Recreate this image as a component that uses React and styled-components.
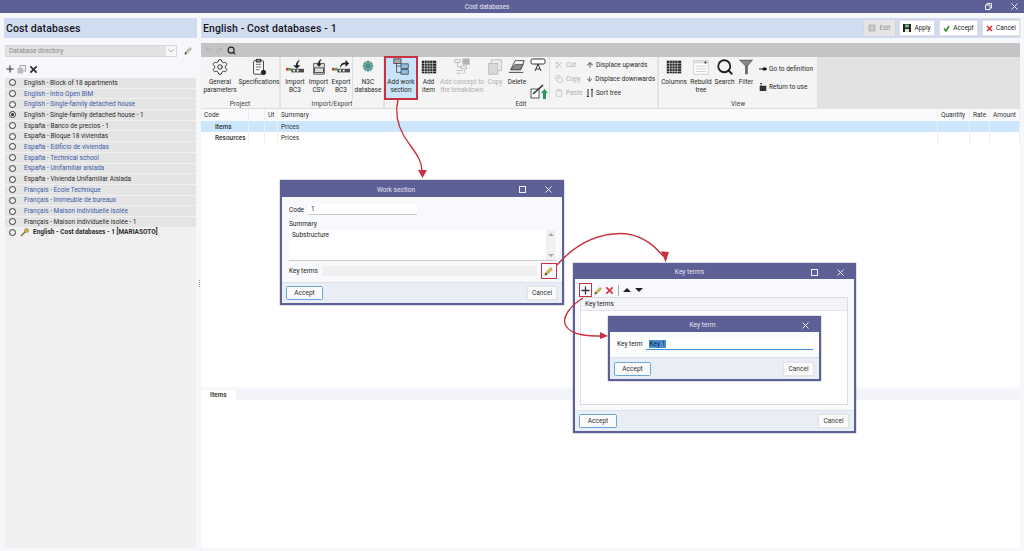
import React from "react";
import styled, { createGlobalStyle } from "styled-components";
import { Settings, Undo2, Redo2, Search, Scissors, Copy, Clipboard, ArrowUp, ArrowDown } from "lucide-react";

const Global = createGlobalStyle`
  html, body { margin: 0; padding: 0; background: #f6f7fb; }
  body { font-family: Roboto, "Noto Sans", sans-serif; color: #222; }
`;

const Page = styled.div`
  position: relative; width: 1024px; height: 551px; overflow: hidden;
  background: #f6f7fb; display: flex; flex-direction: column; font-size: 6.5px;
`;
const TitleBar = styled.div`
  height: 13px; flex: none; background: #5d6095; color: #e9eaf4; position: relative; box-sizing: border-box; padding-right: 50px;
  display: flex; align-items: center; justify-content: center; font-size: 6.4px;
`;
const WinButtons = styled.div`
  position: absolute; right: 0; top: 0; height: 13px; display: flex; align-items: center; gap: 19px; padding-right: 6px;
`;
const Columns = styled.div`
  flex: 1; display: flex; padding: 5px 4px 3px 4px; min-height: 0;
`;
const Side = styled.aside`
  width: 193px; flex: none; display: flex; flex-direction: column;
`;
const Splitter = styled.div`
  width: 4px; flex: none; display: flex; flex-direction: column; align-items: center; justify-content: center; gap: 1px;
  i { width: 1px; height: 1px; background: #999; display: block; }
`;
const PanelHeader = styled.div`
  height: 20px; flex: none; background: #d0dcf0; display: flex; align-items: center; padding-left: 2px; justify-content: space-between;
`;
const PanelTitle = styled.h1`
  margin: 0; font-size: 10.5px; font-weight: 500; color: #15151f; letter-spacing: 0.1px;
`;
const DirRow = styled.div`
  display: flex; align-items: center; gap: 7px; padding: 6px 4px 0 1px; height: 13px;
`;
const DirSelect = styled.div`
  width: 172px; height: 12px; box-sizing: border-box; border: 1px solid #d8d8d8; background: #e2e2e2; color: #8a8a8a;
  display: flex; align-items: center; justify-content: space-between; padding: 0 0 0 3px;
  span:last-child { width: 10px; height: 10px; background: #f6f6f6; display: flex; align-items: center; justify-content: center; }
`;
const MiniBar = styled.div`
  display: flex; align-items: center; gap: 3px; padding: 7px 0 4px 2px; height: 10px;
`;
const DbList = styled.div`
  flex: 1; background: #f0f0f0; display: flex; flex-direction: column; margin: 0 1px;
`;
const DbRow = styled.div`
  height: 9.7px; margin-bottom: 1px; background: #e4e4e4; display: flex; align-items: center; padding-left: 4px; gap: ${p => (p.$bold ? 4 : 8)}px;
  color: ${p => (p.$link ? "#3a5ba8" : "#2a2a2a")}; font-weight: ${p => (p.$bold ? 700 : 400)}; white-space: nowrap;
  &:last-of-type { background: #f0f0f0; }
`;
const Radio = styled.span`
  width: 7px; height: 7px; box-sizing: border-box; border: 1px solid #333; border-radius: 50%; flex: none; background: #f4f4f4;
  display: flex; align-items: center; justify-content: center;
  &::after { content: ""; width: 3px; height: 3px; border-radius: 50%; background: ${p => (p.$on ? "#222" : "transparent")}; }
`;
const Main = styled.main`
  flex: 1; min-width: 0; display: flex; flex-direction: column;
`;
const HeaderActions = styled.div`
  display: flex; gap: 4px;
`;
const ActionButton = styled.button`
  width: ${p => p.$w}px; height: 16px; box-sizing: border-box; font: inherit; font-size: 6.5px; border: 1px solid #e3e3e3;
  background: ${p => (p.$off ? "#e6e6e6" : "#fff")}; color: ${p => (p.$off ? "#8e8e8e" : "#222")};
  display: flex; align-items: center; justify-content: center; gap: 3px; padding: 0; box-shadow: 0 0 1px #bbb;
`;
const GreyBar = styled.div`
  margin-top: 5px; height: 14px; flex: none; background: #c4c4c4; display: flex; align-items: center; gap: 2px; padding-left: 4px;
`;
const Ribbon = styled.div`
  height: 52px; flex: none; background: #e2e2e2; display: flex;
`;
const Group = styled.section`
  width: ${p => p.$w}px; flex: none; background: #f4f4f4; margin-right: 2px; display: flex; flex-direction: column; border-bottom: 1px solid #ddd; box-sizing: border-box;
`;
const GroupTools = styled.div`
  height: 39px; flex: none; display: flex; align-items: flex-start;
`;
const GroupLabel = styled.div`
  flex: 1; padding-top: 4px; display: flex; align-items: center; justify-content: center; color: #444;
`;
const Tool = styled.div`
  width: ${p => p.$w}px; flex: none; height: 42px; box-sizing: border-box; display: flex; flex-direction: column; align-items: center; position: relative;
  text-align: center; line-height: 8.3px; padding-top: 1px; color: ${p => (p.$off ? "#aeaeae" : "#2a2a2a")};
  ${p => p.$hot && "background: #c9e4f8; outline: 2px solid #c8313f; outline-offset: -1px;"}
  white-space: nowrap;
  svg { flex: none; height: 18px; margin-bottom: 2px; }
`;
const VSep = styled.div`
  width: 1px; height: 42px; background: #ddd; flex: none;
`;
const SmallCol = styled.div`
  width: ${p => p.$w}px; flex: none; display: flex; flex-direction: column; gap: ${p => p.$gap ?? 4}px; padding-top: ${p => p.$top ?? 3}px; padding-left: ${p => p.$left ?? 0}px; box-sizing: border-box;
`;
const SmallTool = styled.div`
  display: flex; align-items: center; gap: ${p => p.$gap ?? 2}px; height: 10px; color: ${p => (p.$off ? "#aeaeae" : "#2a2a2a")}; white-space: nowrap;
`;
const TableHead = styled.div`
  height: 12px; flex: none; display: grid; grid-template-columns: 48px 16px 13px 660px 32px 20px 30px;
  align-items: center; background: #fafafc;
`;
const GridRow = styled.div`
  height: 11px; flex: none; display: grid; grid-template-columns: 48px 16px 13px 660px 32px 20px 30px; align-items: center;
  background: ${p => (p.$sel ? "#cbe6fd" : "#fff")};
`;
const Cell = styled.div`
  height: 100%; display: flex; align-items: center; box-sizing: border-box; border-right: 1px solid #eceef4; padding-left: ${p => p.$pad ?? 3}px;
  font-weight: ${p => (p.$bold ? 500 : 400)}; white-space: nowrap; color: #333;
`;
const TableBody = styled.div`
  height: 244px; flex: none; background: #fff;
`;
const TabBar = styled.div`
  margin-top: 3px; height: 10px; flex: none; display: flex; background: #f3f4fa;
`;
const Tab = styled.div`
  width: 35px; background: #fff; display: flex; align-items: center; padding-left: 9px; box-sizing: border-box; font-weight: 700; color: #444;
`;
const Lower = styled.div`
  flex: 1; background: #fff;
`;
const Win = styled.div`
  position: absolute; left: ${p => p.$x}px; top: ${p => p.$y}px; width: ${p => p.$w}px; height: ${p => p.$h}px; box-sizing: border-box;
  border: 2px solid #5d6095; border-top: 0; background: #f8f9fd; display: flex; flex-direction: column;
  box-shadow: 0 0 1px #444a80;
`;
const WinTitle = styled.div`
  height: ${p => p.$h || 16}px; flex: none; background: #5d6095; color: #e4e5f1; position: relative; display: flex; align-items: center; justify-content: center;
  font-size: 6.6px; margin: 0 -2px; box-sizing: border-box; padding: 2px ${p => p.$shift || 0}px 0 0;
`;
const WinTools = styled.div`
  position: absolute; right: 12px; top: 2px; bottom: 0; display: flex; align-items: center; gap: 19px;
`;
const WinBody = styled.div`
  flex: 1; display: flex; flex-direction: column; padding: ${p => p.$pad || "0"}; min-height: 0; background: ${p => p.$bg || "#f8f9fd"};
`;
const WinFooter = styled.div`
  height: ${p => p.$h || 21}px; flex: none; background: #e8edf6; border-top: 1px solid #dde1ea; display: flex; align-items: center; justify-content: space-between;
  padding: 0 5px 0 4px; box-sizing: border-box;
`;
const DlgButton = styled.button`
  width: ${p => p.$w}px; height: 14px; box-sizing: border-box; font: inherit; font-size: 6.6px; padding: 0; border-radius: 1.5px; background: #fafafa; color: #333;
  border: 1px solid ${p => (p.$primary ? "#6ba6d8" : "#e4e4e4")}; box-shadow: ${p => (p.$primary ? "none" : "0 0 1px #ccc")};
`;
const FieldRow = styled.div`
  display: flex; align-items: center; gap: ${p => p.$gap || 4}px; margin-top: ${p => p.$top || 0}px; white-space: nowrap;
`;
const FieldCaption = styled.span`
  margin-top: 5px;
`;
const TextField = styled.div`
  width: ${p => p.$w}px; height: ${p => p.$h || 11}px; box-sizing: border-box; background: #fff; border-bottom: 1px solid ${p => p.$line || "#ccc"};
  display: flex; align-items: center; padding-left: 3px; flex: none;
`;
const Selected = styled.span`
  background: #4a90d8; color: #123; padding: 0 1px;
`;
const SummaryBox = styled.div`
  margin-top: 2px; height: 31px; background: #fff; border-bottom: 1px solid #ccc; display: flex; justify-content: space-between; padding: 1px 1px 0 3px; box-sizing: border-box; flex: none;
`;
const ScrollTrack = styled.div`
  width: 10px; background: #f1f1f1; display: flex; flex-direction: column; justify-content: space-between; align-items: center; padding: 3px 0; margin-top: -1px;
  i { width: 0; height: 0; border-left: 3px solid transparent; border-right: 3px solid transparent; display: block; }
  i:first-child { border-bottom: 3px solid #aaa; }
  i:last-child { border-top: 3px solid #aaa; }
`;
const ReadOnly = styled.div`
  flex: 1; height: 10px; background: #f0f0f0;
`;
const RedBox = styled.div`
  width: ${p => p.$w}px; height: ${p => p.$h}px; box-sizing: border-box; border: 1.5px solid #c8313f; display: flex; align-items: center; justify-content: center; flex: none;
`;
const KeyToolbar = styled.div`
  height: 14px; flex: none; display: flex; align-items: center; gap: 2px; margin: 4px 0 0 4px;
`;
const ToolDivider = styled.div`
  width: 1px; height: 11px; background: #aaa; margin: 0 2px;
`;
const Tri = styled.i`
  width: 0; height: 0; display: block; border-left: 4px solid transparent; border-right: 4px solid transparent; margin-left: ${p => (p.$down ? 2 : 0)}px;
  ${p => (p.$down ? "border-top: 4px solid #222;" : "border-bottom: 4px solid #222;")}
`;
const ListBox = styled.div`
  flex: 1; margin: 0 6px 5px 5px; background: #fff; border: 1px solid #ddd; display: flex; flex-direction: column;
`;
const ListHead = styled.div`
  height: 12px; flex: none; background: #f3f4fa; display: flex; align-items: center; padding-left: 4px; border-bottom: 1px solid #e4e4e4;
`;
const Overlay = styled.svg`
  position: absolute; left: 0; top: 0; width: 1024px; height: 551px; pointer-events: none;
`;

const Pencil = ({ size = 10, color = "#e2b93b" }) => (
  <svg width={size} height={size} viewBox="0 0 12 12">
    <path d="M2 8 8 2l2 2-6 6-3 1z" fill={color} stroke="#7d6a2a" strokeWidth=".6" />
    <path d="M1 11l1-3 2 2z" fill="#333" />
  </svg>
);
const Cross = ({ size = 9, color = "#333", w = 2 }) => (
  <svg width={size} height={size} viewBox="0 0 10 10"><path d="M1.500 1.500l7 7M8.500 1.500l-7 7" stroke={color} strokeWidth={w} fill="none" /></svg>
);
const PlusIcon = ({ size = 10 }) => (
  <svg width={size} height={size} viewBox="0 0 10 10"><path d="M5 .5v9M.5 5h9" stroke="#333" strokeWidth="1.400" fill="none" /></svg>
);
const WinClose = () => <svg width="7" height="7" viewBox="0 0 7 7"><path d="M.5.5l6 6M6.500.5l-6 6" stroke="#f0f0f6" strokeWidth="1" /></svg>;
const WinMax = () => <svg width="7" height="7" viewBox="0 0 7 7"><rect x=".5" y=".5" width="6" height="6" fill="none" stroke="#f0f0f6" strokeWidth="1" /></svg>;
const WinRestore = () => <svg width="7" height="7" viewBox="0 0 7 7"><path d="M.5 2h4.500v4.500H.5zM2 2V.5h4.500V5H5" fill="none" stroke="#fff" strokeWidth=".9" /></svg>;

const Clip = () => (
  <svg width="20" height="20" viewBox="0 0 20 20" fill="none" stroke="#333">
    <rect x="4" y="3" width="11" height="15" rx="1" fill="#fff" /><rect x="7" y="1.500" width="5" height="3" fill="#888" />
    <path d="M6.500 7h6M6.500 10h6M6.500 13h4" strokeWidth=".8" /><circle cx="15" cy="16" r="2.500" fill="#222" />
  </svg>
);
const Bc3 = ({ up }) => (
  <svg width="22" height="20" viewBox="0 0 22 20">
    <rect x="1" y="11" width="3" height="3" fill="#c33" /><rect x="4" y="11" width="3" height="3" fill="#4a4" />
    <rect x="7" y="12" width="14" height="4" fill="#222" opacity=".8" /><rect x="9" y="13" width="2" height="2" fill="#fff" /><rect x="13" y="13" width="2" height="2" fill="#fff" />
    <path d={up ? "M10 11c0-4 2-6 6-6V2l4 4-4 4V7c-3 0-4 1-6 4z" : "M17 2c-3 1-5 3-5 6H9l4 4 4-4h-3c0-2 1-4 3-6z"} fill="#222" />
  </svg>
);
const Csv = () => (
  <svg width="20" height="20" viewBox="0 0 20 20">
    <path d="M4 6h12v12H4z" fill="#ddd" stroke="#333" strokeWidth=".8" /><rect x="5" y="11" width="10" height="5" fill="none" stroke="#222" strokeWidth=".8" />
    <path d="M13 1c-3 1-4 3-4 5H7l3 4 3-4h-2c0-2 1-3 2-5z" fill="#222" />
  </svg>
);
const N3c = () => (
  <svg width="18" height="20" viewBox="0 0 18 20"><circle cx="9" cy="9" r="6" fill="#7fb8ae" /><path d="M4 9h10M9 3v12M5 5l8 8M13 5l-8 8" stroke="#2f6d73" strokeWidth="1" /><circle cx="9" cy="9" r="2" fill="#4a90a0" /></svg>
);
const WorkSection = () => (
  <svg width="20" height="20" viewBox="0 0 20 20" fill="none" stroke="#333" strokeWidth=".8">
    <rect x="2" y="1" width="8" height="5" fill="#aaa" /><rect x="10" y="6.500" width="8" height="5" fill="#8fc2e8" /><rect x="10" y="13" width="8" height="5" fill="#8fc2e8" />
    <path d="M5 6v10h5M5 9h5" />
  </svg>
);
const Grid = () => (
  <svg width="18" height="20" viewBox="0 0 18 20"><rect x="1" y="3" width="16" height="14" fill="#222" /><path d="M1 6h16M1 9h16M1 12h16M1 15h16M4 3v14M7 3v14M10 3v14M13 3v14" stroke="#ddd" strokeWidth=".7" /></svg>
);
const Concept = () => (
  <svg width="20" height="20" viewBox="0 0 20 20" fill="none" stroke="#b9b9b9"><rect x="11" y="1" width="7" height="6" fill="#b0b0b0" /><rect x="2" y="2" width="6" height="3" /><rect x="9" y="9" width="6" height="3" /><path d="M5 5v5h4M4 14h7M4 17h5M13 13v3l-2 1" /></svg>
);
const BigCopy = () => (
  <svg width="18" height="20" viewBox="0 0 18 20"><rect x="5" y="2" width="11" height="12" fill="#eee" stroke="#bbb" /><rect x="2" y="6" width="10" height="12" fill="#d9d9d9" stroke="#bbb" /></svg>
);
const Erase = () => (
  <svg width="20" height="20" viewBox="0 0 20 20"><path d="M3 13L8 3h10l-4 10z" fill="#fff" stroke="#333" /><path d="M3 13L8 7h9l-3 6z" fill="#888" stroke="#333" strokeWidth=".7" /><path d="M1 16h16" stroke="#555" strokeWidth="1.200" /></svg>
);
const Label = () => (
  <svg width="16" height="16" viewBox="0 0 16 16" fill="none" stroke="#333"><rect x="1" y="1" width="14" height="5" rx="1.500" fill="#fff" /><path d="M5 13l3-7 3 7M6 11h4" /></svg>
);
const Replace = () => (
  <svg width="18" height="18" viewBox="0 0 18 18"><rect x="1" y="7" width="8" height="9" fill="#fff" stroke="#333" strokeWidth=".8" /><path d="M3 12l10-9" stroke="#333" strokeWidth="1.600" /><path d="M13 17V11H11l3.500-4 3.500 4h-2v6z" fill="#2a9a5b" /></svg>
);
const Rebuild = () => (
  <svg width="18" height="20" viewBox="0 0 18 20" fill="none"><rect x="1" y="3" width="16" height="15" fill="#fff" stroke="#ccc" /><rect x="1" y="3" width="16" height="3" fill="#ddd" /><rect x="13" y="4" width="2" height="2" fill="#222" /><path d="M3 9h12M3 12h12M3 15h12" stroke="#bbb" strokeWidth=".7" /></svg>
);
const FunnelIcon = () => (
  <svg width="16" height="20" viewBox="0 0 16 20"><path d="M0 2h16L10 9v9H7V9z" fill="#666" /><path d="M2 3h12l-5 5H7z" fill="#8a8a8a" /></svg>
);
const Goto = () => <svg width="8" height="8" viewBox="0 0 8 8"><path d="M0 4h8M4 3h3v2H4z" stroke="#222" strokeWidth="1" /></svg>;
const Back = () => <svg width="8" height="8" viewBox="0 0 8 8"><path d="M1 3h6v5H1zM2 0v3M3 1L2 0 1 1" fill="#333" stroke="#333" strokeWidth=".6" /></svg>;
const SortIcon = () => <svg width="8" height="8" viewBox="0 0 8 8"><path d="M2 0v8M1 7l1 1 1-1M6 8V0M5 1l1-1 1 1" stroke="#333" strokeWidth="1" fill="none" /></svg>;
const KeyIcon = () => (
  <svg width="9" height="9" viewBox="0 0 9 9"><circle cx="6.500" cy="2.500" r="2" fill="#d8b040" stroke="#7d6a2a" strokeWidth=".5" /><path d="M5 4L1 8" stroke="#7d6a2a" strokeWidth="1.300" /></svg>
);
const FloppyIcon = () => (
  <svg width="8" height="8" viewBox="0 0 8 8"><rect width="8" height="8" fill="#222" /><rect x="2" y=".5" width="4" height="3" fill="#6b8" /><rect x="2" y="5" width="4" height="3" fill="#ddd" /></svg>
);
const Tick = () => <svg width="7" height="7" viewBox="0 0 7 7"><path d="M1 3.500l2 2.500 3-5" stroke="#2a8a2a" strokeWidth="1.500" fill="none" /></svg>;

const dbs = [
  ["English - Block of 18 apartments"],
  ["English - Intro Open BIM", 1],
  ["English - Single-family detached house", 1],
  ["English - Single-family detached house - 1", 0, 1],
  ["España - Banco de precios - 1"],
  ["España - Bloque 18 viviendas"],
  ["España - Edificio de viviendas", 1],
  ["España - Technical school", 1],
  ["España - Unifamiliar aislada", 1],
  ["España - Vivienda Unifamiliar Aislada"],
  ["Français - École Technique", 1],
  ["Français - Immeuble de bureaux", 1],
  ["Français - Maison individuelle isolée", 1],
  ["Français - Maison individuelle isolée - 1"],
];

const stroke = { strokeWidth: 1.300, color: "#333" };

export default function App() {
  return (
    <Page>
      <Global />
      <TitleBar>
        Cost databases
        <WinButtons><WinRestore /><WinClose /></WinButtons>
      </TitleBar>
      <Columns>
        <Side>
          <PanelHeader><PanelTitle>Cost databases</PanelTitle></PanelHeader>
          <DirRow>
            <DirSelect>
              <span>Database directory</span>
              <span><svg width="6" height="4" viewBox="0 0 6 4"><path d="M.5.5L3 3 5.500.5" fill="none" stroke="#aaa" /></svg></span>
            </DirSelect>
            <Pencil size={9} color="#c9c9c9" />
          </DirRow>
          <MiniBar>
            <PlusIcon size={8} />
            <svg width="9" height="9" viewBox="0 0 9 9"><rect x="3" y="0.500" width="5.500" height="5.500" fill="#eee" stroke="#aaa" /><rect x=".5" y="3" width="5.500" height="5.500" fill="#bbb" /></svg>
            <Cross size={9} color="#333" />
          </MiniBar>
          <DbList>
            {dbs.map(([t, link, on]) => (
              <DbRow key={t} $link={!!link}><Radio $on={!!on} /><span>{t}</span></DbRow>
            ))}
            <DbRow $bold><Radio /><KeyIcon /><span>English - Cost databases - 1 [MARIASOTO]</span></DbRow>
          </DbList>
        </Side>
        <Splitter><i /><i /><i /><i /></Splitter>
        <Main>
          <PanelHeader>
            <PanelTitle>English - Cost databases - 1</PanelTitle>
            <HeaderActions>
              <ActionButton $w={31} $off><svg width="8" height="8" viewBox="0 0 8 8"><rect x="1" y="1" width="6" height="6" fill="#ccc" stroke="#999" strokeWidth=".6" /></svg>Edit</ActionButton>
              <ActionButton $w={36}><FloppyIcon />Apply</ActionButton>
              <ActionButton $w={39}><Tick />Accept</ActionButton>
              <ActionButton $w={38}><Cross size={7} color="#d8232a" w={2} />Cancel</ActionButton>
            </HeaderActions>
          </PanelHeader>
          <GreyBar>
            <Undo2 size={8} color="#aaa" strokeWidth={2} />
            <Redo2 size={8} color="#aaa" strokeWidth={2} />
            <Search size={9} color="#222" strokeWidth={3} style={{ marginLeft: 2 }} />
          </GreyBar>
          <Ribbon>
            <Group $w={78}>
              <GroupTools>
                <Tool $w={38}><Settings size={18} {...stroke} />General<br />parameters</Tool>
                <Tool $w={40}><Clip />Specifications</Tool>
              </GroupTools>
              <GroupLabel>Project</GroupLabel>
            </Group>
            <Group $w={102}>
              <GroupTools>
                <Tool $w={24} style={{ marginLeft: 2 }}><Bc3 />Import<br />BC3</Tool>
                <Tool $w={23}><Csv />Import<br />CSV</Tool>
                <Tool $w={22}><Bc3 up />Export<br />BC3</Tool>
                <VSep />
                <Tool $w={30}><N3c />N3C<br />database</Tool>
              </GroupTools>
              <GroupLabel>Import/Export</GroupLabel>
            </Group>
            <Group $w={272}>
              <GroupTools>
                <Tool $w={32} $hot><WorkSection />Add work<br />section</Tool>
                <Tool $w={23}><Grid />Add<br />item</Tool>
                <Tool $w={44} $off><Concept />Add concept to<br />the breakdown</Tool>
                <Tool $w={22} $off><BigCopy />Copy</Tool>
                <Tool $w={22}><Erase />Delete</Tool>
                <SmallCol $w={21} $gap={8} $top={1} $left={2}><Label /><Replace /></SmallCol>
                <VSep />
                <SmallCol $w={36} $gap={4} $top={3} $left={5}>
                  <SmallTool $off $gap={3}><Scissors size={8} color="#bbb" />Cut</SmallTool>
                  <SmallTool $off $gap={3}><Copy size={8} color="#bbb" />Copy</SmallTool>
                  <SmallTool $off $gap={3}><Clipboard size={8} color="#bbb" />Paste</SmallTool>
                </SmallCol>
                <SmallCol $w={69} $gap={4} $top={3}>
                  <SmallTool><ArrowUp size={8} color="#777" strokeWidth={3.500} />Displace upwards</SmallTool>
                  <SmallTool><ArrowDown size={8} color="#777" strokeWidth={3.500} />Displace downwards</SmallTool>
                  <SmallTool><SortIcon />Sort tree</SmallTool>
                </SmallCol>
              </GroupTools>
              <GroupLabel>Edit</GroupLabel>
            </Group>
            <Group $w={158}>
              <GroupTools>
                <Tool $w={30}><Grid />Columns</Tool>
                <Tool $w={24}><Rebuild />Rebuild<br />tree</Tool>
                <Tool $w={23}><Search size={18} color="#222" strokeWidth={2.400} />Search</Tool>
                <Tool $w={20}><FunnelIcon />Filter</Tool>
                <SmallCol $w={58} $gap={8} $top={7} $left={3}>
                  <SmallTool><Goto />Go to definition</SmallTool>
                  <SmallTool><Back />Return to use</SmallTool>
                </SmallCol>
              </GroupTools>
              <GroupLabel>View</GroupLabel>
            </Group>
          </Ribbon>
          <TableHead>
            <Cell>Code</Cell><Cell /><Cell>Ut</Cell><Cell>Summary</Cell><Cell>Quantity</Cell><Cell>Rate</Cell><Cell>Amount</Cell>
          </TableHead>
          <GridRow $sel><Cell $pad={14} $bold>Items</Cell><Cell /><Cell /><Cell>Prices</Cell><Cell /><Cell /><Cell /></GridRow>
          <GridRow><Cell $pad={14} $bold>Resources</Cell><Cell /><Cell /><Cell>Prices</Cell><Cell /><Cell /><Cell /></GridRow>
          <TableBody />
          <TabBar><Tab>Items</Tab></TabBar>
          <Lower />
        </Main>
      </Columns>

      <Win $x={280} $y={180} $w={284} $h={125}>
        <WinTitle $h={17} $shift={52}>Work section<WinTools><WinMax /><WinClose /></WinTools></WinTitle>
        <WinBody $pad="7px 5px 0 7px">
          <FieldRow><span>Code</span><TextField $w={109}>1</TextField></FieldRow>
          <FieldCaption>Summary</FieldCaption>
          <SummaryBox>Substructure<ScrollTrack><i /><i /></ScrollTrack></SummaryBox>
          <FieldRow $gap={4} $top={2}>
            <span>Key terms</span><ReadOnly />
            <RedBox $w={16} $h={16}><Pencil size={10} /></RedBox>
          </FieldRow>
        </WinBody>
        <WinFooter $h={21}><DlgButton $w={37} $primary>Accept</DlgButton><DlgButton $w={30}>Cancel</DlgButton></WinFooter>
      </Win>

      <Win $x={573} $y={263} $w={283} $h={170}>
        <WinTitle $h={16} $shift={50}>Key terms<WinTools><WinMax /><WinClose /></WinTools></WinTitle>
        <KeyToolbar>
          <RedBox $w={13} $h={14}><PlusIcon size={9} /></RedBox>
          <Pencil size={9} />
          <Cross size={9} color="#d8313a" w={1.800} />
          <ToolDivider />
          <Tri />
          <Tri $down />
        </KeyToolbar>
        <ListBox><ListHead>Key terms</ListHead></ListBox>
        <WinFooter $h={21}><DlgButton $w={38} $primary>Accept</DlgButton><DlgButton $w={31}>Cancel</DlgButton></WinFooter>
      </Win>

      <Win $x={608} $y={316} $w={213} $h={65}>
        <WinTitle $h={16} $shift={24}>Key term<WinTools><WinClose /></WinTools></WinTitle>
        <WinBody $bg="#fbfcfe" $pad="6px 6px 0 7px">
          <FieldRow $gap={3}><span>Key term</span><TextField $w={167} $h={12} $line="#3d8fd6"><Selected>Key 1</Selected></TextField></FieldRow>
        </WinBody>
        <WinFooter $h={22}><DlgButton $w={37} $primary>Accept</DlgButton><DlgButton $w={31}>Cancel</DlgButton></WinFooter>
      </Win>

      <Overlay viewBox="0 0 1024 551" fill="none">
        <path d="M398 99 C395 112 397 124 404 136 C412 149 422 158 422 171" stroke="#c8313f" strokeWidth="1.400" />
        <path d="M418 170h9l-4.500 8z" fill="#c8313f" />
        <path d="M557 265 C572 248 592 234 620 233.500 C640 233.500 654 245 663 256" stroke="#c8313f" strokeWidth="1.400" />
        <path d="M660 252l8 -1-1 11z" fill="#c8313f" transform="rotate(12 664 256)" />
        <path d="M583 298 C570 306 561 318 566 326 C572 336 590 336 602 336" stroke="#c8313f" strokeWidth="1.400" />
        <path d="M600 332l8 4-8 3z" fill="#c8313f" />
      </Overlay>
    </Page>
  );
}
